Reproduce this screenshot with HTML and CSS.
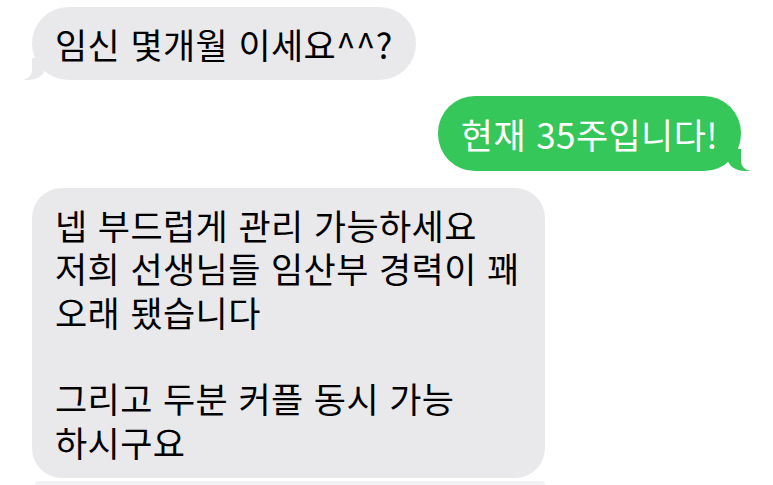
FILE: index.html
```html
<!DOCTYPE html>
<html lang="ko">
<head>
<meta charset="utf-8">
<link rel="stylesheet" href="styles.css">
</head>
<body>
<div class="thread">
  <div class="bubble in tail">임신 몇개월 이세요^^?</div>
  <div class="bubble out tail">현재 35주입니다!</div>
  <div class="bubble in big">넵 부드럽게 관리 가능하세요<br>저희 선생님들 임산부 경력이 꽤<br>오래 됐습니다<br><br>그리고 두분 커플 동시 가능<br>하시구요</div>
  <div class="bubble in peek"></div>
</div>
</body>
</html>
```

FILE: styles.css
```css
html, body {
  margin: 0;
  padding: 0;
  background: #ffffff;
}
.thread {
  display: flex;
  flex-direction: column;
  padding: 7px 32px 0 32px;
  height: 485px;
  box-sizing: border-box;
  overflow: hidden;
  font-family: "Noto Sans CJK KR", "Noto Sans", sans-serif;
}
.bubble {
  position: relative;
  font-size: 35px;
  line-height: 43.4px;
  letter-spacing: 0.4px;
  padding: 15px 23px;
  border-radius: 37px;
  width: fit-content;
  color: #000;
  background: #e9e9eb;
}
.bubble.in {
  align-self: flex-start;
}
.bubble.out {
  align-self: flex-end;
  margin-top: 16px;
  padding: 16px 23px 15px 23px;
  background: #35c759;
  color: #fff;
}
.bubble.big {
  margin-top: 17px;
  border-radius: 30px;
  padding-right: 25px;
}
.bubble.peek {
  margin-top: 3px;
  width: 510px;
  height: 40px;
  padding: 0;
  background: #f2f2f4;
  border-radius: 30px 30px 0 0;
  margin-left: 3px;
}
.bubble.tail::before,
.bubble.tail::after {
  content: "";
  position: absolute;
  bottom: 0;
  height: 22px;
}
.bubble.in.tail::before {
  left: -10px;
  width: 24px;
  background: #e9e9eb;
  border-bottom-right-radius: 18px 14px;
}
.bubble.in.tail::after {
  left: -14px;
  width: 14px;
  background: #fff;
  border-bottom-right-radius: 10px;
}
.bubble.out.tail::before {
  right: -10px;
  width: 24px;
  background: #35c759;
  border-bottom-left-radius: 18px 14px;
}
.bubble.out.tail::after {
  right: -14px;
  width: 14px;
  background: #fff;
  border-bottom-left-radius: 10px;
}
```
